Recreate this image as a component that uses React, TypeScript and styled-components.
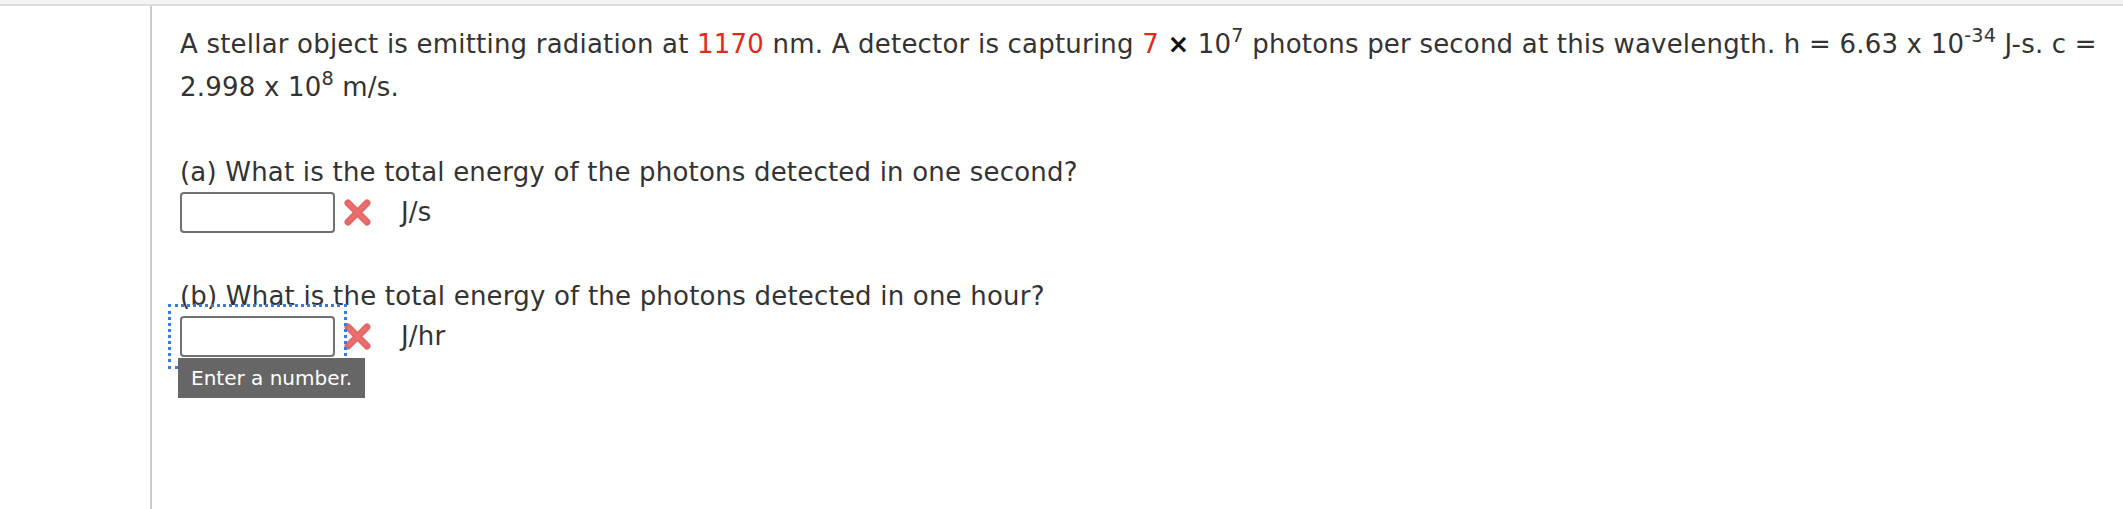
import styled, { createGlobalStyle } from "styled-components";

const GlobalStyle = createGlobalStyle`
  html, body {
    margin: 0;
    padding: 0;
    background: #ffffff;
  }
  body {
    font-family: "DejaVu Sans", Verdana, sans-serif;
    color: #333333;
  }
`;

const TopBand = styled.div`
  height: 4px;
  background-color: #f3f3f3;
  border-bottom: 2px solid #dddddd;
`;

const Page = styled.div`
  display: flex;
  min-height: 503px;
`;

const Gutter = styled.div`
  width: 150px;
  flex-shrink: 0;
  border-right: 2px solid #cccccc;
`;

const Content = styled.div`
  flex: 1;
  padding: 17px 20px 0 28px;
  font-size: 26px;
  letter-spacing: 0.2px;
`;

const Question = styled.p`
  margin: 0;
  line-height: 43px;
`;

const Red = styled.span`
  color: #e4281d;
`;

const Times = styled.b`
  color: #111111;
`;

const Sup = styled.sup`
  font-size: 0.74em;
  line-height: 0;
  vertical-align: 0.55em;
`;

const Part = styled.div`
  margin-top: 44px;
`;

const Label = styled.div`
  line-height: 39px;
`;

const Row = styled.div`
  display: flex;
  align-items: center;
  height: 41px;
`;

const Field = styled.div<{ $focused?: boolean }>`
  position: relative;
  display: flex;
  outline: ${(p) => (p.$focused ? "3px dotted #3a7bdc" : "none")};
  outline-offset: 9px;
`;

const Input = styled.input`
  box-sizing: border-box;
  width: 155px;
  height: 41px;
  border: 2px solid #717171;
  border-radius: 4px;
  background: #ffffff;
  font: inherit;
  outline: none;
`;

const Tooltip = styled.div`
  position: absolute;
  left: -2px;
  top: 42px;
  z-index: 2;
  height: 40px;
  padding: 0 13px;
  background-color: #666666;
  color: #ffffff;
  font-size: 20px;
  letter-spacing: 0;
  line-height: 40px;
  white-space: nowrap;
`;

const Mark = styled.svg`
  margin-left: 8px;
  width: 29px;
  height: 29px;
  flex-shrink: 0;
`;

const Unit = styled.span`
  margin-left: 29px;
  line-height: 41px;
`;

const WrongMark = () => (
  <Mark viewBox="0 0 29 29">
    <g stroke="#e25454" strokeWidth="7" strokeLinecap="round" opacity="0.88">
      <line x1="5" y1="5" x2="24" y2="24" />
      <line x1="24" y1="5" x2="5" y2="24" />
    </g>
    <g stroke="#ee7676" strokeWidth="2.5" strokeLinecap="round" opacity="0.6">
      <line x1="6" y1="6" x2="23" y2="23" />
      <line x1="23" y1="6" x2="6" y2="23" />
    </g>
  </Mark>
);

export default function App() {
  return (
    <>
      <GlobalStyle />
      <TopBand />
      <Page>
        <Gutter />
        <Content>
          <Question>
            A stellar object is emitting radiation at <Red>1170</Red> nm. A detector is capturing{" "}
            <Red>7</Red> <Times>×</Times> 10<Sup>7</Sup> photons per second at this wavelength. h =
            6.63 x 10<Sup>-34</Sup> J-s. c = 2.998 x 10<Sup>8</Sup> m/s.
          </Question>

          <Part>
            <Label>(a) What is the total energy of the photons detected in one second?</Label>
            <Row>
              <Field>
                <Input type="text" />
              </Field>
              <WrongMark />
              <Unit>J/s</Unit>
            </Row>
          </Part>

          <Part>
            <Label>(b) What is the total energy of the photons detected in one hour?</Label>
            <Row>
              <Field $focused>
                <Input type="text" />
                <Tooltip>Enter a number.</Tooltip>
              </Field>
              <WrongMark />
              <Unit>J/hr</Unit>
            </Row>
          </Part>
        </Content>
      </Page>
    </>
  );
}
